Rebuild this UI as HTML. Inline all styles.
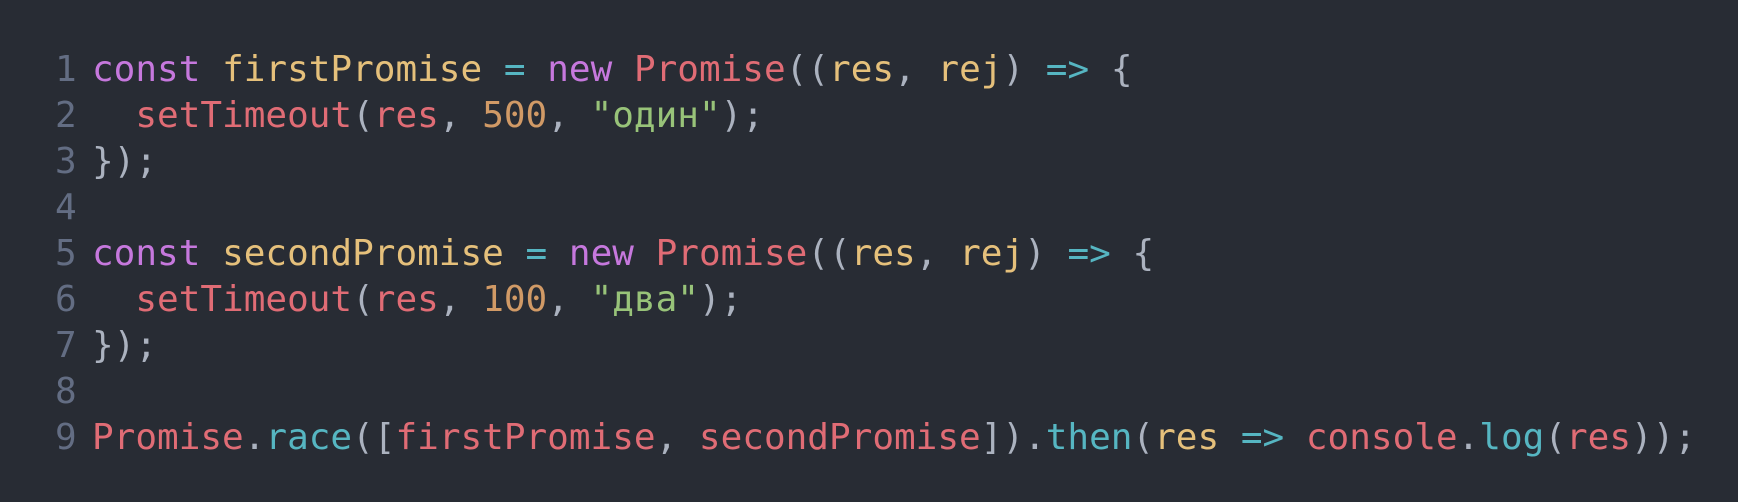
<!DOCTYPE html>
<html><head><meta charset="utf-8"><style>
html,body{margin:0;padding:0;background:#282c34;width:1738px;height:502px;overflow:hidden}
pre{margin:0;position:absolute;left:55px;top:47px;font-family:"DejaVu Sans Mono","Liberation Mono",monospace;font-size:36px;line-height:46px;color:#abb2bf}
.n{color:#636d83;display:inline-block;width:22px;margin-right:15px}
.k{color:#c678dd}.v{color:#e5c07b}.o{color:#56b6c2}.r{color:#e06c75}.num{color:#d19a66}.s{color:#98c379}.f{color:#56b6c2}
</style></head><body>
<pre><span class="n">1</span><span class="k">const</span> <span class="v">firstPromise</span> <span class="o">=</span> <span class="k">new</span> <span class="r">Promise</span>((<span class="v">res</span>, <span class="v">rej</span>) <span class="o">=&gt;</span> {
<span class="n">2</span>  <span class="r">setTimeout</span>(<span class="r">res</span>, <span class="num">500</span>, <span class="s">"один"</span>);
<span class="n">3</span>});
<span class="n">4</span>
<span class="n">5</span><span class="k">const</span> <span class="v">secondPromise</span> <span class="o">=</span> <span class="k">new</span> <span class="r">Promise</span>((<span class="v">res</span>, <span class="v">rej</span>) <span class="o">=&gt;</span> {
<span class="n">6</span>  <span class="r">setTimeout</span>(<span class="r">res</span>, <span class="num">100</span>, <span class="s">"два"</span>);
<span class="n">7</span>});
<span class="n">8</span>
<span class="n">9</span><span class="r">Promise</span>.<span class="f">race</span>([<span class="r">firstPromise</span>, <span class="r">secondPromise</span>]).<span class="f">then</span>(<span class="v">res</span> <span class="o">=&gt;</span> <span class="r">console</span>.<span class="f">log</span>(<span class="r">res</span>));</pre>
</body></html>
